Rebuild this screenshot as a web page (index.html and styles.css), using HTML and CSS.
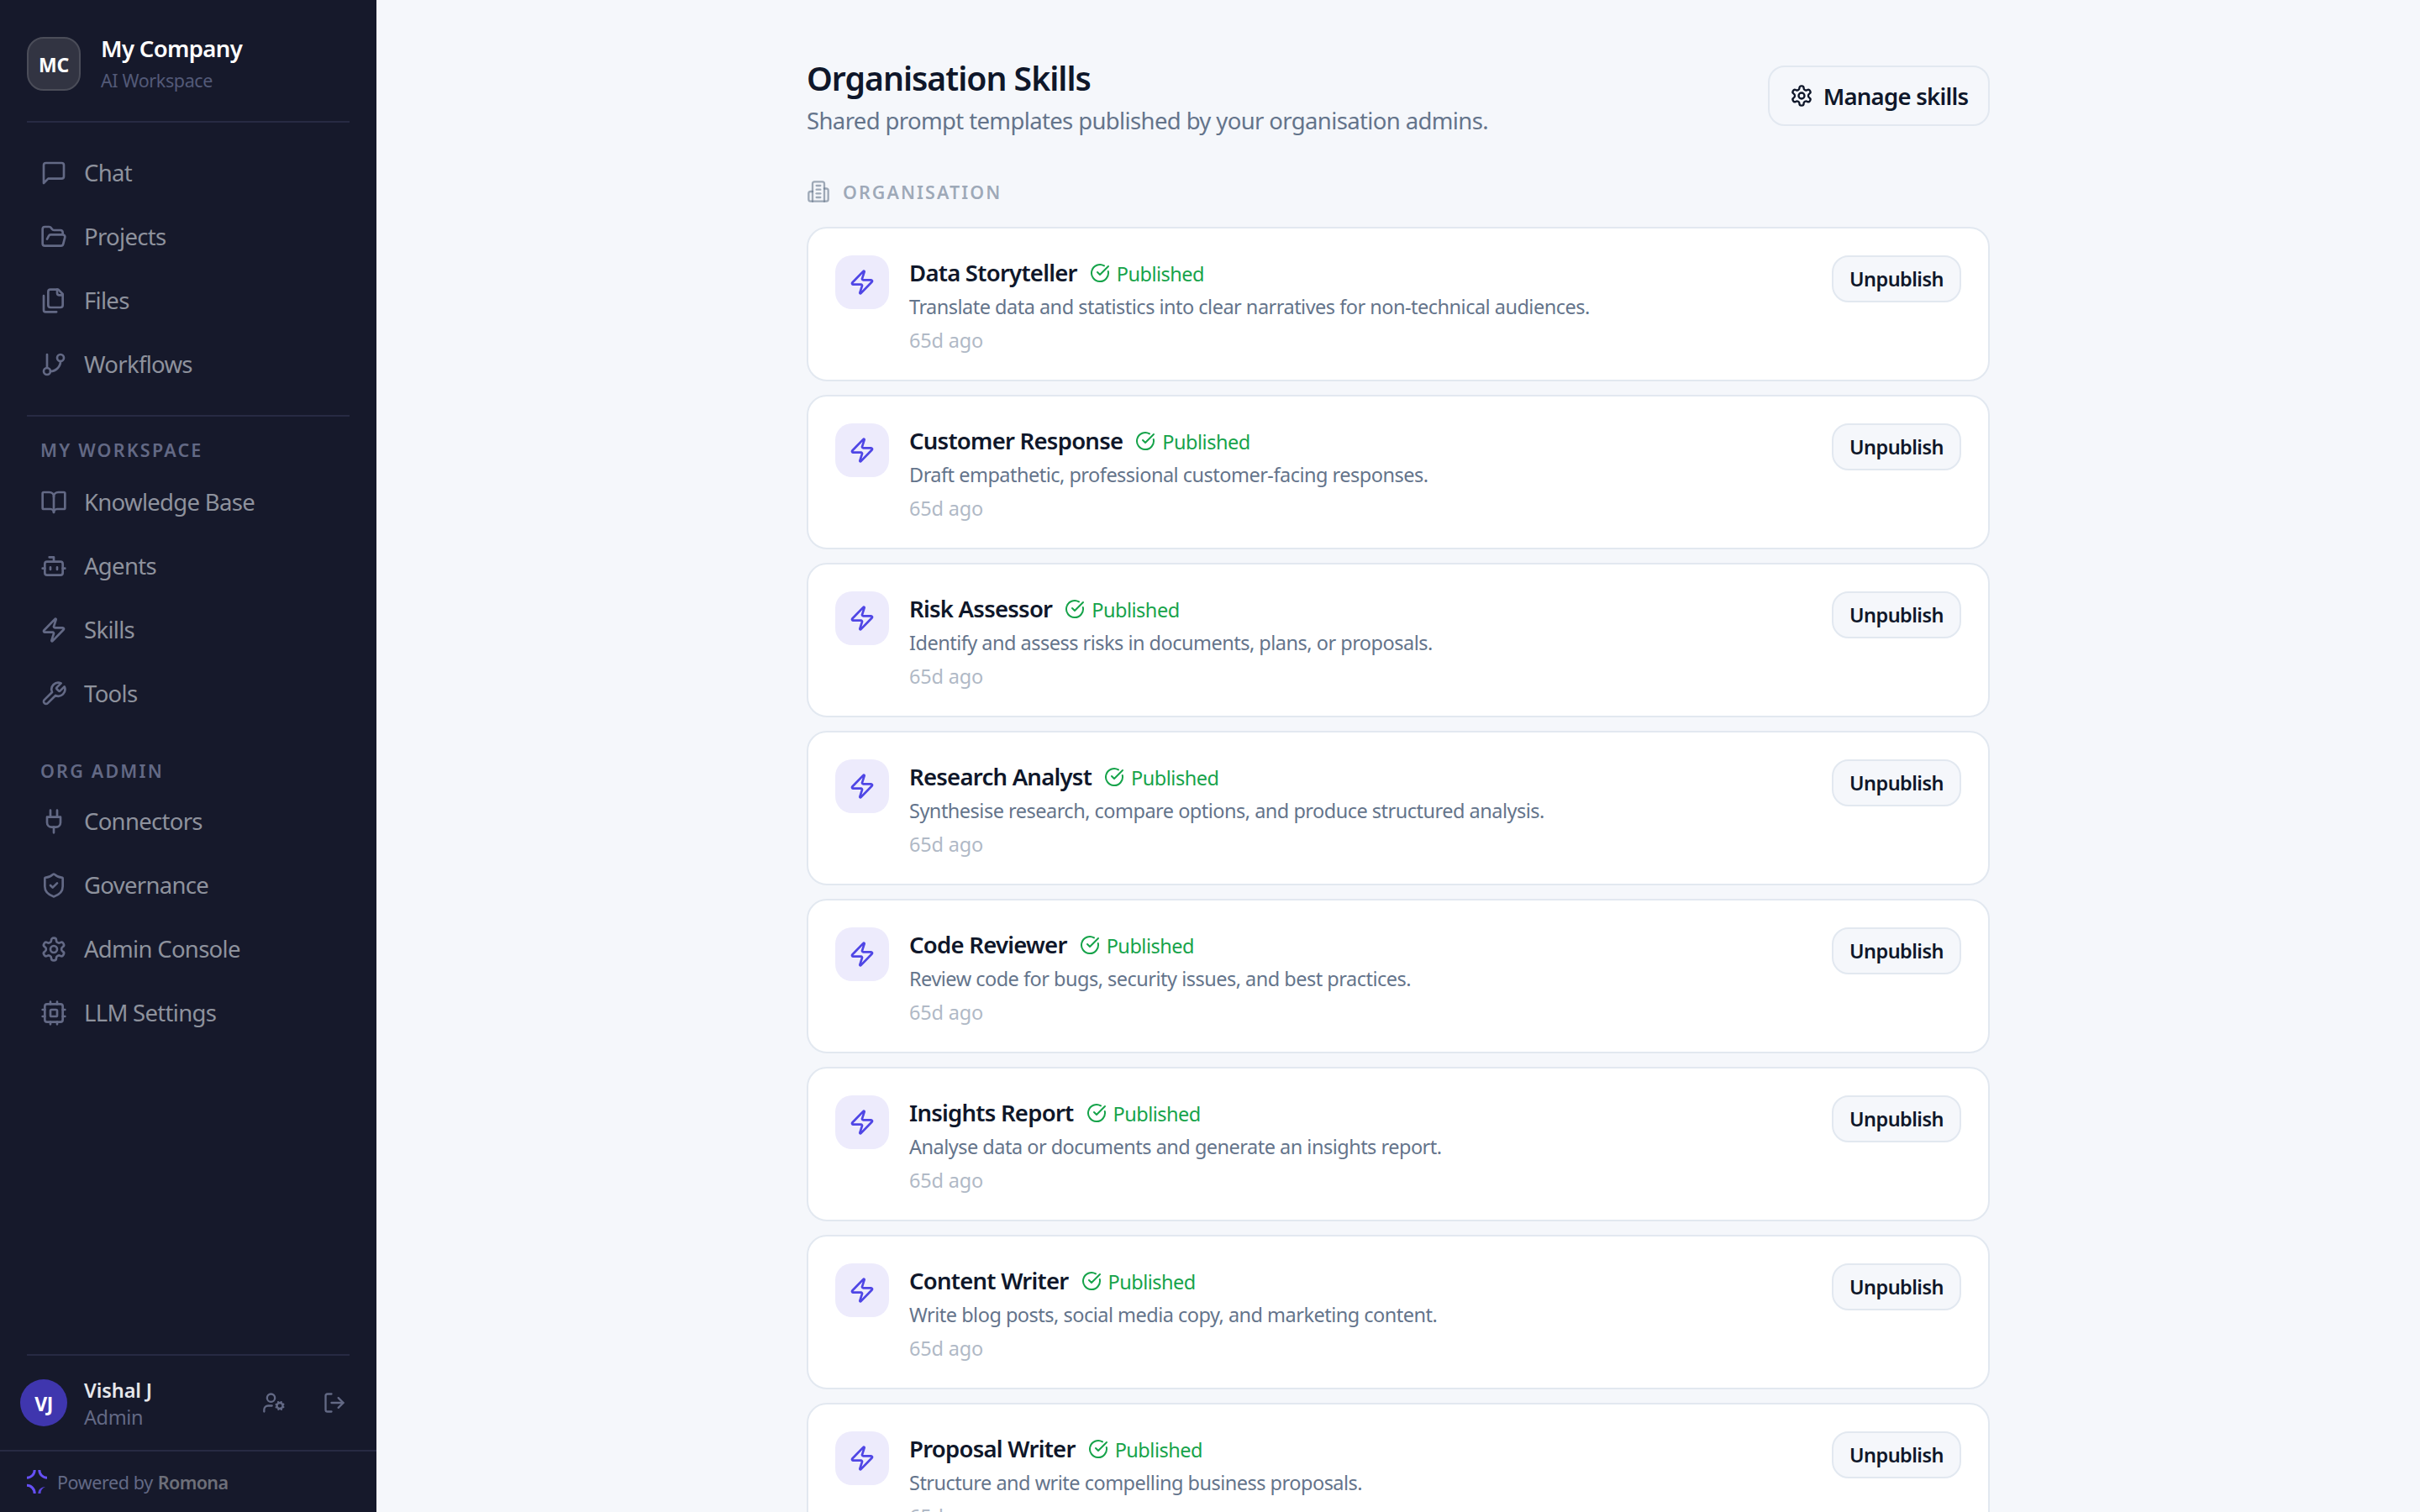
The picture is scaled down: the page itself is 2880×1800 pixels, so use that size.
FILE: index.html
```
<!DOCTYPE html>
<html lang="en">

<head>
  <meta charset="UTF-8">
  <meta name="viewport" content="width=device-width, initial-scale=1">
  <title>Organisation Skills</title>
  <link rel="stylesheet" href="styles.css">
</head>

<body>

  <!-- shared icons -->
  <svg class="sprite" width="0" height="0">
    <symbol id="zap" viewBox="0 0 24 24">
      <path d="M4 14a1 1 0 0 1-.78-1.63l9.9-10.2a.5.5 0 0 1 .86.46l-1.92 6.02A1 1 0 0 0 13 10h7a1 1 0 0 1 .78 1.63l-9.9 10.2a.5.5 0 0 1-.86-.46l1.92-6.02A1 1 0 0 0 11 14z"/>
    </symbol>
    <symbol id="settings" viewBox="0 0 24 24">
      <path d="M12.22 2h-.44a2 2 0 0 0-2 2v.18a2 2 0 0 1-1 1.73l-.43.25a2 2 0 0 1-2 0l-.15-.08a2 2 0 0 0-2.73.73l-.22.38a2 2 0 0 0 .73 2.73l.15.1a2 2 0 0 1 1 1.72v.51a2 2 0 0 1-1 1.74l-.15.09a2 2 0 0 0-.73 2.73l.22.38a2 2 0 0 0 2.73.73l.15-.08a2 2 0 0 1 2 0l.43.25a2 2 0 0 1 1 1.73V20a2 2 0 0 0 2 2h.44a2 2 0 0 0 2-2v-.18a2 2 0 0 1 1-1.73l.43-.25a2 2 0 0 1 2 0l.15.08a2 2 0 0 0 2.73-.73l.22-.39a2 2 0 0 0-.73-2.73l-.15-.08a2 2 0 0 1-1-1.74v-.5a2 2 0 0 1 1-1.74l.15-.09a2 2 0 0 0 .73-2.73l-.22-.38a2 2 0 0 0-2.73-.73l-.15.08a2 2 0 0 1-2 0l-.43-.25a2 2 0 0 1-1-1.73V4a2 2 0 0 0-2-2z"/>
      <circle cx="12" cy="12" r="3"/>
    </symbol>
    <symbol id="check" viewBox="0 0 24 24">
      <path d="M21.801 10A10 10 0 1 1 17 3.335"/>
      <path d="m9 11 3 3L22 4"/>
    </symbol>
  </svg>

  <div class="app">
    <aside class="sidebar">
      <div class="brand">
        <div class="brand-logo">MC</div>
        <div>
          <div class="brand-name">My Company</div>
          <div class="brand-sub">AI Workspace</div>
        </div>
      </div>

      <nav class="nav nav-main">
        <a class="nav-item">
          <svg class="icon" viewBox="0 0 24 24"><path d="M21 15a2 2 0 0 1-2 2H7l-4 4V5a2 2 0 0 1 2-2h14a2 2 0 0 1 2 2z"/></svg>
          <span>Chat</span>
        </a>
        <a class="nav-item">
          <svg class="icon" viewBox="0 0 24 24"><path d="m6 14 1.5-2.9A2 2 0 0 1 9.24 10H20a2 2 0 0 1 1.94 2.5l-1.54 6a2 2 0 0 1-1.95 1.5H4a2 2 0 0 1-2-2V5a2 2 0 0 1 2-2h3.9a2 2 0 0 1 1.69.9l.81 1.2a2 2 0 0 0 1.67.9H18a2 2 0 0 1 2 2v2"/></svg>
          <span>Projects</span>
        </a>
        <a class="nav-item">
          <svg class="icon" viewBox="0 0 24 24"><path d="M20 7h-3a2 2 0 0 1-2-2V2"/><path d="M9 18a2 2 0 0 1-2-2V4a2 2 0 0 1 2-2h7l4 4v10a2 2 0 0 1-2 2Z"/><path d="M3 7.6v12.8A1.6 1.6 0 0 0 4.6 22h9.8"/></svg>
          <span>Files</span>
        </a>
        <a class="nav-item">
          <svg class="icon" viewBox="0 0 24 24"><path d="M6 3v12"/><circle cx="18" cy="6" r="3"/><circle cx="6" cy="18" r="3"/><path d="M18 9a9 9 0 0 1-9 9"/></svg>
          <span>Workflows</span>
        </a>
      </nav>

      <div class="nav-title">MY WORKSPACE</div>
      <nav class="nav">
        <a class="nav-item">
          <svg class="icon" viewBox="0 0 24 24"><path d="M12 7v14"/><path d="M3 18a1 1 0 0 1-1-1V4a1 1 0 0 1 1-1h5a4 4 0 0 1 4 4 4 4 0 0 1 4-4h5a1 1 0 0 1 1 1v13a1 1 0 0 1-1 1h-6a3 3 0 0 0-3 3 3 3 0 0 0-3-3z"/></svg>
          <span>Knowledge Base</span>
        </a>
        <a class="nav-item">
          <svg class="icon" viewBox="0 0 24 24"><path d="M12 8V4H8"/><rect width="16" height="12" x="4" y="8" rx="2"/><path d="M2 14h2M20 14h2M15 13v2M9 13v2"/></svg>
          <span>Agents</span>
        </a>
        <a class="nav-item">
          <svg class="icon"><use href="#zap"/></svg>
          <span>Skills</span>
        </a>
        <a class="nav-item">
          <svg class="icon" viewBox="0 0 24 24"><path d="M14.7 6.3a1 1 0 0 0 0 1.4l1.6 1.6a1 1 0 0 0 1.4 0l3.77-3.77a6 6 0 0 1-7.94 7.94l-6.91 6.91a2.12 2.12 0 0 1-3-3l6.91-6.91a6 6 0 0 1 7.94-7.94l-3.76 3.76z"/></svg>
          <span>Tools</span>
        </a>
      </nav>

      <div class="nav-title nav-title-admin">ORG ADMIN</div>
      <nav class="nav">
        <a class="nav-item">
          <svg class="icon" viewBox="0 0 24 24"><path d="M12 22v-5M9 8V2M15 8V2"/><path d="M18 8v5a4 4 0 0 1-4 4h-4a4 4 0 0 1-4-4V8Z"/></svg>
          <span>Connectors</span>
        </a>
        <a class="nav-item">
          <svg class="icon" viewBox="0 0 24 24"><path d="M20 13c0 5-3.5 7.5-7.66 8.95a1 1 0 0 1-.67-.01C7.5 20.5 4 18 4 13V6a1 1 0 0 1 1-1c2 0 4.5-1.2 6.24-2.72a1.17 1.17 0 0 1 1.52 0C14.51 3.81 17 5 19 5a1 1 0 0 1 1 1z"/><path d="m9 12 2 2 4-4"/></svg>
          <span>Governance</span>
        </a>
        <a class="nav-item">
          <svg class="icon"><use href="#settings"/></svg>
          <span>Admin Console</span>
        </a>
        <a class="nav-item">
          <svg class="icon" viewBox="0 0 24 24"><rect width="16" height="16" x="4" y="4" rx="2"/><rect width="6" height="6" x="9" y="9" rx="1"/><path d="M15 2v2M15 20v2M2 15h2M2 9h2M20 15h2M20 9h2M9 2v2M9 20v2"/></svg>
          <span>LLM Settings</span>
        </a>
      </nav>

      <div class="user">
        <div class="avatar">VJ</div>
        <div class="user-info">
          <div class="user-name">Vishal J</div>
          <div class="user-role">Admin</div>
        </div>
        <svg class="icon icon-sm" viewBox="0 0 24 24"><circle cx="18" cy="15" r="3"/><circle cx="9" cy="7" r="4"/><path d="M10 15H6a4 4 0 0 0-4 4v2"/><path d="m21.7 16.4-.9-.3M15.2 13.9l-.9-.3M16.6 18.7l.3-.9M19.1 12.2l.3-.9M19.6 18.7l-.4-1M16.8 12.3l-.4-1M14.3 16.6l1-.4M20.7 13.8l1-.4"/></svg>
        <svg class="icon icon-sm" viewBox="0 0 24 24"><path d="M9 21H5a2 2 0 0 1-2-2V5a2 2 0 0 1 2-2h4"/><path d="m16 17 5-5-5-5"/><path d="M21 12H9"/></svg>
      </div>

      <div class="powered">
        <svg class="powered-logo" viewBox="0 0 24 28">
          <path d="M9.2 0A9.2 9.2 0 0 1 0 9.2M14.8 0A9.2 9.2 0 0 0 24 9.2M0 18.3A9.2 9.7 0 0 1 9.2 28"/>
          <path class="tail" d="M13.3 28C13.5 23.5 16.5 20.3 22 20C18.5 21.5 16.6 24 16.4 28Z"/>
        </svg>
        <span>Powered by</span>
        <strong>Romona</strong>
      </div>
    </aside>

    <main class="main">
      <header class="page-header">
        <div>
          <h1>Organisation Skills</h1>
          <p class="lead">Shared prompt templates published by your organisation admins.</p>
        </div>
        <button class="btn btn-manage">
          <svg class="icon"><use href="#settings"/></svg>
          Manage skills
        </button>
      </header>

      <div class="section-title">
        <svg class="icon" viewBox="0 0 24 24"><path d="M6 22V4a2 2 0 0 1 2-2h8a2 2 0 0 1 2 2v18Z"/><path d="M6 12H4a2 2 0 0 0-2 2v6a2 2 0 0 0 2 2h2"/><path d="M18 9h2a2 2 0 0 1 2 2v9a2 2 0 0 1-2 2h-2"/><path d="M10 6h4"/><path d="M10 10h4"/><path d="M10 14h4"/><path d="M10 18h4"/></svg>
        <span>ORGANISATION</span>
      </div>

      <div class="skills">
        <div class="card">
          <div class="card-icon"><svg class="icon"><use href="#zap"/></svg></div>
          <div class="card-body">
            <div class="card-head">
              <span class="name">Data Storyteller</span>
              <span class="status"><svg class="icon"><use href="#check"/></svg><span>Published</span></span>
            </div>
            <p class="desc">Translate data and statistics into clear narratives for non-technical audiences.</p>
            <p class="time">65d ago</p>
          </div>
          <button class="btn">Unpublish</button>
        </div>

        <div class="card">
          <div class="card-icon"><svg class="icon"><use href="#zap"/></svg></div>
          <div class="card-body">
            <div class="card-head">
              <span class="name">Customer Response</span>
              <span class="status"><svg class="icon"><use href="#check"/></svg><span>Published</span></span>
            </div>
            <p class="desc">Draft empathetic, professional customer-facing responses.</p>
            <p class="time">65d ago</p>
          </div>
          <button class="btn">Unpublish</button>
        </div>

        <div class="card">
          <div class="card-icon"><svg class="icon"><use href="#zap"/></svg></div>
          <div class="card-body">
            <div class="card-head">
              <span class="name">Risk Assessor</span>
              <span class="status"><svg class="icon"><use href="#check"/></svg><span>Published</span></span>
            </div>
            <p class="desc">Identify and assess risks in documents, plans, or proposals.</p>
            <p class="time">65d ago</p>
          </div>
          <button class="btn">Unpublish</button>
        </div>

        <div class="card">
          <div class="card-icon"><svg class="icon"><use href="#zap"/></svg></div>
          <div class="card-body">
            <div class="card-head">
              <span class="name">Research Analyst</span>
              <span class="status"><svg class="icon"><use href="#check"/></svg><span>Published</span></span>
            </div>
            <p class="desc">Synthesise research, compare options, and produce structured analysis.</p>
            <p class="time">65d ago</p>
          </div>
          <button class="btn">Unpublish</button>
        </div>

        <div class="card">
          <div class="card-icon"><svg class="icon"><use href="#zap"/></svg></div>
          <div class="card-body">
            <div class="card-head">
              <span class="name">Code Reviewer</span>
              <span class="status"><svg class="icon"><use href="#check"/></svg><span>Published</span></span>
            </div>
            <p class="desc">Review code for bugs, security issues, and best practices.</p>
            <p class="time">65d ago</p>
          </div>
          <button class="btn">Unpublish</button>
        </div>

        <div class="card">
          <div class="card-icon"><svg class="icon"><use href="#zap"/></svg></div>
          <div class="card-body">
            <div class="card-head">
              <span class="name">Insights Report</span>
              <span class="status"><svg class="icon"><use href="#check"/></svg><span>Published</span></span>
            </div>
            <p class="desc">Analyse data or documents and generate an insights report.</p>
            <p class="time">65d ago</p>
          </div>
          <button class="btn">Unpublish</button>
        </div>

        <div class="card">
          <div class="card-icon"><svg class="icon"><use href="#zap"/></svg></div>
          <div class="card-body">
            <div class="card-head">
              <span class="name">Content Writer</span>
              <span class="status"><svg class="icon"><use href="#check"/></svg><span>Published</span></span>
            </div>
            <p class="desc">Write blog posts, social media copy, and marketing content.</p>
            <p class="time">65d ago</p>
          </div>
          <button class="btn">Unpublish</button>
        </div>

        <div class="card">
          <div class="card-icon"><svg class="icon"><use href="#zap"/></svg></div>
          <div class="card-body">
            <div class="card-head">
              <span class="name">Proposal Writer</span>
              <span class="status"><svg class="icon"><use href="#check"/></svg><span>Published</span></span>
            </div>
            <p class="desc">Structure and write compelling business proposals.</p>
            <p class="time">65d ago</p>
          </div>
          <button class="btn">Unpublish</button>
        </div>
      </div>
    </main>
  </div>

</body>

</html>
```
FILE: styles.css
```
* {
  box-sizing: border-box;
}

body {
  margin: 0;
  font-family: "Segoe UI", "Noto Sans", "Open Sans", sans-serif;
  background: #f5f7fb;
  color: #0f172a;
  overflow: hidden;
}

h1,
p {
  margin: 0;
}

.sprite {
  display: none;
}

.icon {
  width: 32px;
  height: 32px;
  flex-shrink: 0;
  fill: none;
  stroke: currentColor;
  stroke-width: 2;
  stroke-linecap: round;
  stroke-linejoin: round;
}

.app {
  display: flex;
  height: 100vh;
}

/* sidebar */
.sidebar {
  width: 448px;
  flex-shrink: 0;
  display: flex;
  flex-direction: column;
  background: #16192b;
  color: #636985;
}

.brand {
  display: flex;
  align-items: flex-start;
  gap: 24px;
  height: 146px;
  margin: 0 32px;
  padding-top: 6px;
  border-bottom: 2px solid #272a43;
}

.brand-logo {
  display: flex;
  align-items: center;
  justify-content: center;
  width: 64px;
  height: 64px;
  margin-top: 38px;
  padding-top: 2px;
  border: 2px solid #4b4d59;
  border-radius: 20px;
  background: #323442;
  color: #fff;
  font-size: 23px;
  font-weight: 700;
  letter-spacing: -0.2px;
}

.brand-name {
  margin-top: 32px;
  color: #fff;
  font-size: 27.5px;
  font-weight: 600;
  line-height: 40px;
  letter-spacing: -0.65px;
}

.brand-sub {
  color: #535a78;
  font-size: 21.5px;
  line-height: 36px;
  letter-spacing: -0.38px;
}

.nav {
  display: flex;
  flex-direction: column;
  gap: 4px;
  padding: 0 32px;
}

.nav-main {
  margin: 0 32px;
  padding: 24px 0;
  border-bottom: 2px solid #272a43;
}

.nav-item {
  display: flex;
  align-items: center;
  gap: 20px;
  height: 72px;
  padding: 0 16px;
}

.nav-item span {
  color: #8e929d;
  font-size: 27.5px;
  line-height: 38px;
  letter-spacing: -0.7px;
}

.nav-title {
  padding: 22px 48px 8px;
  font-size: 21.5px;
  font-weight: 600;
  line-height: 36px;
  letter-spacing: 2.2px;
}

.nav-title-admin {
  padding-top: 38px;
  padding-bottom: 6px;
}

.user {
  display: flex;
  align-items: center;
  height: 114px;
  margin: auto 32px 0;
  padding-right: 4px;
  border-top: 2px solid #272a43;
}

.avatar {
  display: flex;
  align-items: center;
  justify-content: center;
  width: 56px;
  height: 56px;
  margin: 0 20px 0 -8px;
  padding-top: 1px;
  border-radius: 50%;
  background: #3f36ae;
  color: #fff;
  font-size: 23px;
  font-weight: 700;
  letter-spacing: -0.5px;
}

.user-info {
  flex: 1;
  padding-top: 2px;
  font-size: 23.5px;
  line-height: 32px;
}

.user-name {
  color: #e6e7eb;
  font-weight: 600;
  letter-spacing: -0.1px;
}

.user-role {
  color: #636985;
  letter-spacing: -0.4px;
}

.icon-sm {
  width: 28px;
  height: 28px;
}

.icon-sm + .icon-sm {
  margin-left: 44px;
}

.powered {
  display: flex;
  align-items: center;
  height: 74px;
  padding-left: 32px;
  border-top: 2px solid #272a43;
  font-size: 21.5px;
  letter-spacing: -0.4px;
}

.powered strong {
  margin-left: 6px;
  color: #6d6f79;
  font-weight: 600;
  letter-spacing: -0.6px;
}

.powered-logo {
  width: 24px;
  height: 28px;
  margin-right: 12px;
  fill: none;
  stroke: #6650f6;
  stroke-width: 3;
}

.powered-logo .tail {
  fill: #5a46dc;
  stroke: none;
}

/* page */
.main {
  flex: 1;
  display: flex;
  flex-direction: column;
  align-items: center;
}

.page-header,
.section-title,
.skills {
  width: 1408px;
  flex-shrink: 0;
}

.page-header {
  display: flex;
  justify-content: space-between;
  align-items: flex-start;
  height: 164px;
  padding-top: 65px;
}

h1 {
  font-size: 39.2px;
  font-weight: 600;
  line-height: 56px;
  letter-spacing: -1px;
}

.lead {
  margin-top: 2px;
  color: #64748b;
  font-size: 27.5px;
  line-height: 42px;
  letter-spacing: -0.63px;
}

.btn {
  display: flex;
  align-items: center;
  justify-content: center;
  width: 154px;
  height: 56px;
  padding: 0;
  border: 2px solid #e2e8f0;
  border-radius: 20px;
  background: #f5f7fb;
  color: #0f172a;
  font-family: inherit;
  font-size: 23.5px;
  font-weight: 600;
  letter-spacing: -0.55px;
}

.btn-manage {
  width: 264px;
  height: 72px;
  margin-top: 13px;
  gap: 12px;
  font-size: 27.5px;
  letter-spacing: -0.75px;
}

.btn-manage .icon {
  width: 28px;
  height: 28px;
}

.section-title {
  display: flex;
  align-items: center;
  gap: 15px;
  height: 36px;
  margin: 46px 0 24px;
  color: rgba(100, 116, 139, 0.6);
  font-size: 21.5px;
  font-weight: 600;
  letter-spacing: 2.05px;
}

.section-title .icon {
  width: 28px;
  height: 28px;
}

.skills {
  display: flex;
  flex-direction: column;
  gap: 16px;
}

.card {
  display: flex;
  align-items: flex-start;
  height: 184px;
  flex-shrink: 0;
  padding: 32px;
  border: 2px solid #e2e8f0;
  border-radius: 24px;
  background: #fff;
}

.card-icon {
  display: flex;
  align-items: center;
  justify-content: center;
  width: 64px;
  height: 64px;
  margin-right: 24px;
  border-radius: 20px;
  background: #edebfc;
  color: #4f46e5;
}

.card-body {
  flex: 1;
}

.card-head {
  display: flex;
  align-items: center;
  gap: 15px;
  height: 41px;
}

.name {
  font-size: 27.5px;
  font-weight: 600;
  line-height: 38px;
  letter-spacing: -0.75px;
}

.status {
  display: flex;
  align-items: center;
  gap: 8px;
  color: #16a34a;
  font-size: 23.5px;
  line-height: 34px;
  letter-spacing: -0.5px;
}

.status span {
  padding-top: 2px;
}

.status .icon {
  width: 24px;
  height: 24px;
}

.desc {
  color: #64748b;
  font-size: 23.5px;
  line-height: 40px;
  letter-spacing: -0.51px;
}

.time {
  color: #b0b9c6;
  font-size: 23.5px;
  line-height: 40px;
  letter-spacing: -0.2px;
}
```
